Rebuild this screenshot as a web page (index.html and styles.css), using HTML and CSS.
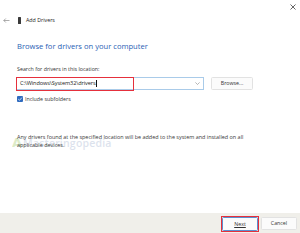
FILE: index.html
```html
<!DOCTYPE html>
<html>
<head>
<meta charset="utf-8">
<link rel="stylesheet" href="styles.css">
</head>
<body>
<div class="window">
  <div class="topbar">
    <svg class="close" width="6" height="6" viewBox="0 0 6 6"><path d="M0.5 0.5L5.5 5.5M5.5 0.5L0.5 5.5" stroke="#555" stroke-width="0.9"/></svg>
  </div>
  <div class="header">
    <svg class="back" width="7" height="5" viewBox="0 0 7 5"><path d="M6.5 2.5H0.8M2.8 0.5L0.8 2.5L2.8 4.5" stroke="#8a8a8a" stroke-width="0.7" fill="none"/></svg>
    <span class="devicon"></span>
    <span class="title">Add Drivers</span>
  </div>
  <div class="content">
    <h1 class="heading">Browse for drivers on your computer</h1>
    <div class="label">Search for drivers in this location:</div>
    <div class="inputrow">
      <div class="input">
        <span class="value">C:\Windows\System32\drivers</span><span class="caret"></span>
        <svg class="chev" width="5" height="3" viewBox="0 0 5 3"><path d="M0.4 0.4L2.5 2.5L4.6 0.4" stroke="#888" stroke-width="0.6" fill="none"/></svg>
        <div class="mark"></div>
      </div>
      <div class="btn browse">Browse...</div>
    </div>
    <div class="checkrow">
      <span class="check"><svg width="6" height="6" viewBox="0 0 6 6"><path d="M1.2 3.1L2.5 4.3L4.9 1.6" stroke="#fff" stroke-width="0.7" fill="none"/></svg></span>
      <span class="checklabel">Include subfolders</span>
    </div>
    <div class="para">
      <div class="watermark"><span class="wlogo">A</span><span class="wtext">Masteringopedia</span></div>
      <p>Any drivers found at the specified location will be added to the system and installed on all applicable devices.</p>
    </div>
  </div>
  <div class="footer">
    <div class="btn next"><span>Next</span><div class="mark"></div></div>
    <div class="btn cancel">Cancel</div>
  </div>
</div>
</body>
</html>
```
FILE: styles.css
```css
* { box-sizing: border-box; }
html, body { margin: 0; padding: 0; }
body {
  width: 300px;
  height: 233px;
  background: #fff;
  font-family: "Open Sans", "Noto Sans", sans-serif;
  color: #333;
  overflow: hidden;
}
.window {
  display: flex;
  flex-direction: column;
  height: 233px;
}
.topbar {
  height: 13px;
  display: flex;
  justify-content: flex-end;
  align-items: center;
  padding-right: 4px;
  padding-top: 1px;
}
.header {
  height: 14px;
  display: flex;
  align-items: center;
  padding-left: 3px;
}
.back { margin-right: 8px; }
.devicon {
  width: 3px;
  height: 7px;
  background: #3a3a3a;
  border-radius: 0.5px;
  margin-right: 5px;
}
.title {
  font-size: 5.3px;
  color: #222;
}
.content {
  flex: 1;
  padding-left: 17px;
  display: flex;
  flex-direction: column;
}
.heading {
  margin: 14px 0 0 0;
  font-size: 7.6px;
  font-weight: normal;
  color: #2a62b5;
  line-height: 11px;
  height: 11px;
}
.label {
  margin-top: 14px;
  font-size: 5.3px;
  line-height: 7px;
  color: #333;
}
.inputrow {
  margin-top: 3px;
  display: flex;
  align-items: center;
  height: 14px;
}
.input {
  position: relative;
  margin-left: -1px;
  width: 188px;
  height: 13px;
  border: 1px solid #a9cbe9;
  display: flex;
  align-items: center;
  padding-left: 3px;
}
.value {
  font-size: 5.6px;
  color: #222;
  letter-spacing: -0.1px;
}
.caret {
  width: 0.6px;
  height: 7px;
  background: #111;
  margin-left: 0.5px;
}
.chev {
  position: absolute;
  right: 3px;
  top: 4px;
}
.input .mark {
  position: absolute;
  left: -1px;
  top: -1px;
  width: 118px;
  height: 14px;
  border: 1px solid #e5303c;
}
.btn {
  display: flex;
  align-items: center;
  justify-content: center;
  font-size: 5.3px;
  color: #333;
  background: #fbfbfb;
  border: 1px solid #e2e2e2;
  border-radius: 1.5px;
}
.browse {
  margin-left: 7px;
  width: 42px;
  height: 13px;
}
.checkrow {
  margin-top: 5px;
  display: flex;
  align-items: center;
  height: 7px;
}
.check {
  width: 6px;
  height: 6px;
  background: #2f6bbf;
  border-radius: 1px;
  display: flex;
  margin-right: 2px;
}
.checklabel {
  font-size: 5.3px;
  color: #333;
}
.para {
  position: relative;
  margin-top: 31px;
}
.para p {
  position: relative;
  margin: 0;
  font-size: 5.45px;
  line-height: 8px;
  color: #3a3a3a;
  width: 238px;
}
.watermark {
  position: absolute;
  left: -5px;
  top: 2px;
  display: flex;
  align-items: baseline;
  opacity: 0.3;
}
.wlogo {
  font-family: "DejaVu Sans", sans-serif;
  font-weight: bold;
  font-size: 13px;
  color: #8ec04a;
  margin-right: 1px;
}
.wtext {
  font-family: "Open Sans", sans-serif;
  font-weight: 600;
  font-size: 10.5px;
  color: #8fa3c6;
  letter-spacing: 0.2px;
}
.footer {
  height: 20px;
  background: #f0efea;
  display: flex;
  justify-content: flex-end;
  align-items: center;
  padding-right: 3px;
  gap: 3px;
}
.next {
  position: relative;
  width: 36px;
  height: 14px;
  border: 1px solid #5b8fd0;
  margin-top: 1px;
}
.next span { text-decoration: underline; text-decoration-thickness: 0.4px; text-underline-offset: 1px; }
.next .mark {
  position: absolute;
  left: -2px;
  top: -2px;
  width: 38px;
  height: 16px;
  border: 1px solid #e5303c;
}
.cancel {
  width: 36px;
  height: 13px;
}
```
